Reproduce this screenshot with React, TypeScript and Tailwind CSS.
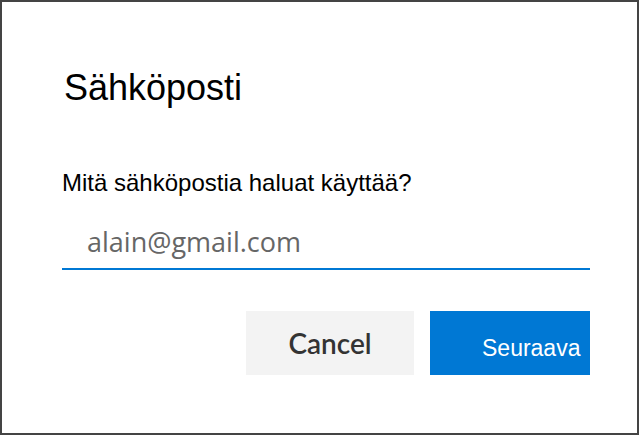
import type { ReactElement } from 'react';

export default function App(): ReactElement {
  return (
    <div className="box-border flex h-[435px] w-[639px] flex-col border-2 border-[#444444] bg-white px-[60px] font-['Liberation_Sans',Arial,sans-serif] text-black">
      <h1 className="ml-[2px] mt-[68px] h-[36px] text-[36px] font-normal leading-none">
        Sähköposti
      </h1>

      <label
        className="mt-[65px] block h-[24px] text-[24px] leading-none"
        htmlFor="email"
      >
        Mitä sähköpostia haluat käyttää?
      </label>

      <input
        id="email"
        type="email"
        className="mt-[33px] box-border block h-[42px] w-[528px] border-b-2 border-[#0078d4] bg-transparent pb-[14px] pl-[25px] font-['Open_Sans',sans-serif] text-[27px] leading-[28px] text-[#333333] outline-none placeholder:text-[#666666]"
        placeholder="alain@gmail.com"
      />

      <div className="mt-[41px] flex w-[528px] justify-end gap-4">
        <button
          type="button"
          className="flex h-[64px] w-[168px] items-center justify-center bg-[#f3f3f3] font-['Lato',sans-serif] text-[28px] font-semibold leading-none text-[#333333]"
        >
          Cancel
        </button>
        <button
          type="submit"
          className="flex h-[64px] w-[160px] items-center bg-[#0078d4] pl-[52px] pt-[10px] text-[23px] leading-none text-white"
        >
          Seuraava
        </button>
      </div>
    </div>
  );
}
